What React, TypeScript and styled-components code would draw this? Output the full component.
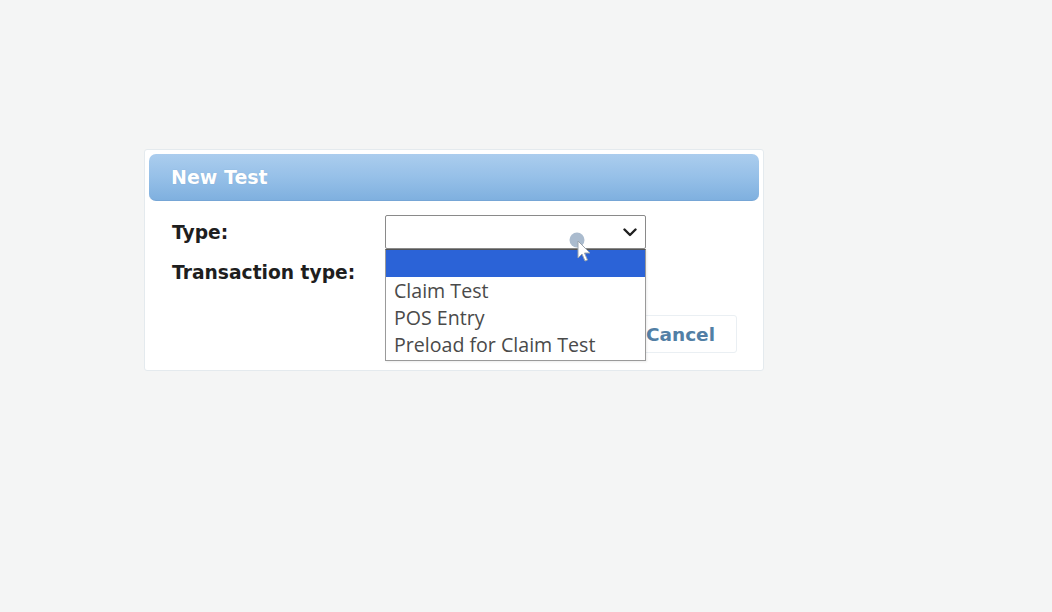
import React from "react";
import styled, { createGlobalStyle } from "styled-components";

const Global = createGlobalStyle`
  html, body { margin: 0; padding: 0; background: #f4f5f5; }
  body { font-family: "DejaVu Sans", Verdana, sans-serif; }
`;

const Page = styled.div`
  width: 1052px;
  height: 612px;
  box-sizing: border-box;
  padding: 149px 0 0 144px;
  background: #f4f5f5;
  position: relative;
  overflow: hidden;
`;

const Dialog = styled.div`
  width: 620px;
  box-sizing: border-box;
  background: #ffffff;
  border: 1px solid #e4eaee;
  border-radius: 3px;
  padding: 4px 4px 17px;
`;

const Header = styled.div`
  height: 47px;
  box-sizing: border-box;
  border-radius: 7px;
  background: linear-gradient(to bottom, #abcdee 0%, #96c0e8 50%, #7fb0df 100%);
  border-bottom: 1px solid #76a6d6;
  display: flex;
  align-items: center;
  padding: 0 0 0 22px;
  color: #ffffff;
  font-weight: bold;
  font-size: 19px;
  text-shadow: 0 0 1px rgba(90, 130, 170, 0.4);
`;

const Form = styled.div`
  display: grid;
  grid-template-columns: 213px 261px;
  row-gap: 8px;
  padding: 14px 0 0 23px;
  align-items: center;
`;

const Label = styled.div`
  font-weight: bold;
  font-size: 18.7px;
  color: #1e1e1e;
`;

const FieldWrap = styled.div`
  position: relative;
`;

const Select = styled.div<{ $h?: number }>`
  height: ${(p) => p.$h ?? 34}px;
  box-sizing: border-box;
  border: 1px solid #8a8a8a;
  border-radius: 2px;
  background: #fff;
  display: flex;
  align-items: center;
  justify-content: flex-end;
  padding-right: 8px;
`;

const List = styled.div`
  position: absolute;
  left: 0;
  top: 34px;
  width: 261px;
  box-sizing: border-box;
  background: #fff;
  border: 1px solid #9a9a9a;
  border-top: 1px solid #555;
  box-shadow: 1px 1px 2px rgba(0, 0, 0, 0.08);
  z-index: 5;
  padding-bottom: 2px;
`;

const Option = styled.div<{ $active?: boolean }>`
  height: 27px;
  box-sizing: border-box;
  padding-left: 8px;
  display: flex;
  align-items: center;
  font-family: "Open Sans", "Noto Sans", sans-serif;
  font-size: 19.6px;
  color: #4a4a4a;
  background: ${(p) => (p.$active ? "#2b63d7" : "transparent")};
  white-space: nowrap;
`;

const Buttons = styled.div`
  display: flex;
  justify-content: flex-end;
  padding: 28px 22px 0 0;
`;

const Button = styled.div`
  height: 38px;
  box-sizing: border-box;
  padding: 0 21px 0 16px;
  border: 1px solid #eaeff3;
  border-radius: 3px;
  background: #fff;
  display: flex;
  align-items: center;
  font-weight: bold;
  font-size: 18.5px;
  color: #527fa5;
`;

const Cursor = styled.svg`
  position: absolute;
  left: 568px;
  top: 231px;
  z-index: 10;
  overflow: visible;
`;

function Chevron() {
  return (
    <svg width="14" height="9" viewBox="0 0 14 9">
      <path d="M1.5 1.5 L7 7 L12.5 1.5" fill="none" stroke="#1f1f1f" strokeWidth="2.4" strokeLinecap="round" strokeLinejoin="round" />
    </svg>
  );
}

export default function App() {
  return (
    <>
      <Global />
      <Page>
        <Dialog>
          <Header>New Test</Header>
          <Form>
            <Label>Type:</Label>
            <FieldWrap>
              <Select>
                <Chevron />
              </Select>
              <List>
                <Option $active>&nbsp;</Option>
                <Option>Claim Test</Option>
                <Option>POS Entry</Option>
                <Option>Preload for Claim Test</Option>
              </List>
            </FieldWrap>
            <Label>Transaction type:</Label>
            <FieldWrap>
              <Select $h={30} />
            </FieldWrap>
          </Form>
          <Buttons>
            <Button>Cancel</Button>
          </Buttons>
        </Dialog>
        <Cursor width="24" height="34" viewBox="0 0 24 34">
          <circle cx="9" cy="9" r="7.5" fill="rgba(125,150,180,0.65)" />
          <path d="M10 10 L10 27 L14 23 L17 30 L19.5 29 L16.5 22 L22 22 Z" fill="#ffffff" stroke="#9aa4ae" strokeWidth="1" strokeLinejoin="round" />
        </Cursor>
      </Page>
    </>
  );
}
